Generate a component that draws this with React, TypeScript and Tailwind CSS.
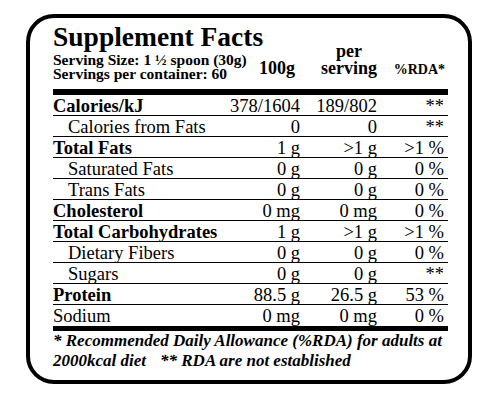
const rows: { label: string; a: string; b: string; c: string; bold?: boolean; sub?: boolean }[] = [
  { label: "Calories/kJ", a: "378/1604", b: "189/802", c: "**", bold: true },
  { label: "Calories from Fats", a: "0", b: "0", c: "**", sub: true },
  { label: "Total Fats", a: "1 g", b: ">1 g", c: ">1 %", bold: true },
  { label: "Saturated Fats", a: "0 g", b: "0 g", c: "0 %", sub: true },
  { label: "Trans Fats", a: "0 g", b: "0 g", c: "0 %", sub: true },
  { label: "Cholesterol", a: "0 mg", b: "0 mg", c: "0 %", bold: true },
  { label: "Total Carbohydrates", a: "1 g", b: ">1 g", c: ">1 %", bold: true },
  { label: "Dietary Fibers", a: "0 g", b: "0 g", c: "0 %", sub: true },
  { label: "Sugars", a: "0 g", b: "0 g", c: "**", sub: true },
  { label: "Protein", a: "88.5 g", b: "26.5 g", c: "53 %", bold: true },
  { label: "Sodium", a: "0 mg", b: "0 mg", c: "0 %" },
];

export default function App() {
  return (
    <div className="w-[500px] h-[400px] bg-white pt-[14px] pl-[26px] text-black font-['Liberation_Serif','Times_New_Roman',serif]">
      <div className="w-[446px] h-[370px] border-4 border-black rounded-[28px] pt-[5px] pl-[23px] pr-[20px]">
        <h1 className="text-[27.5px] leading-[27.5px] font-bold">Supplement Facts</h1>

        <div className="flex items-end h-[30px]">
          <div className="flex-1 min-w-0 self-start whitespace-nowrap text-[15.5px] leading-[14px] font-bold pt-[2px]">
            <div>Serving Size: 1 ½ spoon (30g)</div>
            <div>Servings per container: 60</div>
          </div>
          <div className="w-[80px] text-right pr-[5px] text-[18px] leading-[17px] font-bold mb-[4px]">100g</div>
          <div className="w-[77px] text-right text-[18px] leading-[17px] font-bold mb-[4px]">
            <div className="inline-block text-center">
              per
              <br />
              serving
            </div>
          </div>
          <div className="w-[71px] text-right pr-[3px] text-[14px] leading-[17px] font-bold mb-[3px]">%RDA*</div>
        </div>

        <div className="h-[6px] bg-black mt-[8px]" />

        {rows.map((r, i) => (
          <div
            key={r.label}
            className={`flex h-[21px] pt-[1px] text-[18.5px] leading-[20px] ${
              i < rows.length - 1 ? "border-b border-black" : ""
            }`}
          >
            <div className={`flex-1 whitespace-nowrap ${r.bold ? "font-bold" : ""} ${r.sub ? "pl-[15px]" : ""}`}>
              {r.label}
            </div>
            <div className="w-[80px] text-right">{r.a}</div>
            <div className="w-[77px] text-right">{r.b}</div>
            <div className="w-[71px] text-right pr-[4px]">{r.c}</div>
          </div>
        ))}

        <div className="h-[5px] bg-black" />

        <div className="text-[17px] leading-[20px] font-bold italic whitespace-nowrap">
          <div>* Recommended Daily Allowance (%RDA) for adults at</div>
          <div>
            2000kcal diet<span className="ml-[14px]">** RDA are not established</span>
          </div>
        </div>
      </div>
    </div>
  );
}
